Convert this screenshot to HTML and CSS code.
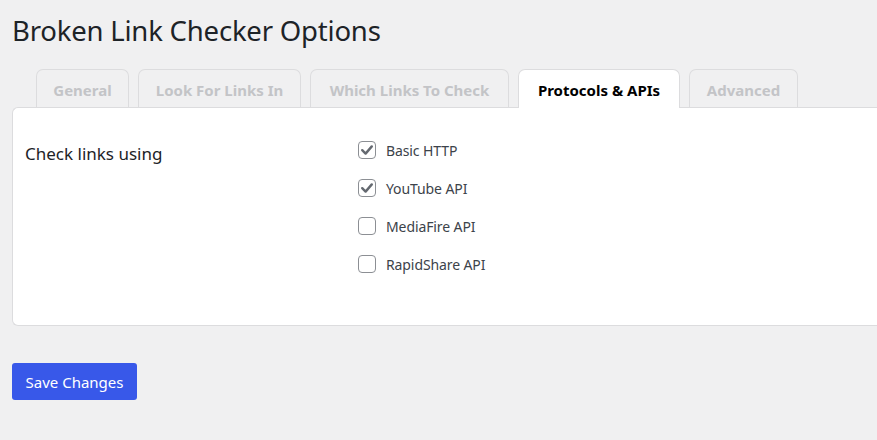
FILE: index.html
```html
<!DOCTYPE html>
<html>
<head>
<meta charset="utf-8">
<link rel="stylesheet" href="styles.css">
</head>
<body>
<div class="wrap">
  <h1 class="title">Broken Link Checker Options</h1>
  <div class="tabs">
    <div class="tab tab-general">General</div>
    <div class="tab tab-look">Look For Links In</div>
    <div class="tab tab-which">Which Links To Check</div>
    <div class="tab tab-proto active">Protocols &amp; APIs</div>
    <div class="tab tab-adv">Advanced</div>
  </div>
  <div class="panel">
    <div class="row">
      <div class="label">Check links using</div>
      <div class="options">
        <label class="opt"><span class="box checked"><svg viewBox="0 0 18 18" width="18" height="18"><path d="M4.2 9.2 L7.6 12.6 L13.8 5.4" fill="none" stroke="#646970" stroke-width="2.4" stroke-linecap="round" stroke-linejoin="round"/></svg></span>Basic HTTP</label>
        <label class="opt"><span class="box checked"><svg viewBox="0 0 18 18" width="18" height="18"><path d="M4.2 9.2 L7.6 12.6 L13.8 5.4" fill="none" stroke="#646970" stroke-width="2.4" stroke-linecap="round" stroke-linejoin="round"/></svg></span>YouTube API</label>
        <label class="opt"><span class="box"></span>MediaFire API</label>
        <label class="opt"><span class="box"></span>RapidShare API</label>
      </div>
    </div>
  </div>
  <button class="save">Save Changes</button>
</div>
</body>
</html>
```
FILE: styles.css
```css
html, body {
  margin: 0;
  padding: 0;
  background: #f0f0f1;
  font-family: "Noto Sans", "Open Sans", sans-serif;
  color: #1d2327;
}
.wrap {
  padding: 0 0 0 12px;
  overflow: hidden;
}
.title {
  margin: 0;
  padding-top: 13px;
  font-size: 27.5px;
  font-weight: 400;
  line-height: 36px;
  color: #1d2327;
  letter-spacing: -0.2px;
}
.tabs {
  display: flex;
  gap: 9px;
  padding-left: 24px;
  margin-top: 20px;
  position: relative;
  z-index: 1;
}
.tab {
  height: 38px;
  box-sizing: border-box;
  border: 1px solid #dcdcde;
  border-bottom: none;
  border-radius: 7px 7px 0 0;
  background: #f0f0f1;
  color: #c3c4c7;
  font-weight: 700;
  font-size: 15px;
  line-height: 40px;
  text-align: center;
  white-space: nowrap;
}
.tab-general { width: 93px; }
.tab-look { width: 163px; }
.tab-which { width: 199px; }
.tab-proto { width: 162px; }
.tab-adv { width: 109px; }
.tab.active {
  background: #fff;
  color: #000;
  height: 39px;
}
.panel {
  background: #fff;
  border: 1px solid #dcdcde;
  border-right: none;
  border-radius: 6px 0 0 6px;
  margin-top: -1px;
  height: 219px;
  box-sizing: border-box;
  padding: 33px 0 0 12px;
}
.row {
  display: flex;
}
.label {
  width: 333px;
  font-size: 17px;
  line-height: 24px;
  padding-top: 1px;
  color: #1d2327;
}
.options {
  display: flex;
  flex-direction: column;
  gap: 20px;
}
.opt {
  display: flex;
  align-items: center;
  height: 18px;
  font-size: 14px;
  color: #3c434a;
  letter-spacing: -0.1px;
}
.box {
  width: 18px;
  height: 18px;
  box-sizing: border-box;
  border: 1px solid #8c8f94;
  border-radius: 4px;
  margin-right: 10px;
  position: relative;
  background: #fff;
}
.box svg {
  position: absolute;
  left: -1px;
  top: -1px;
}
.save {
  display: block;
  margin-top: 37px;
  background: #3858e9;
  color: #fff;
  border: none;
  border-radius: 3px;
  height: 37px;
  width: 125px;
  font-family: inherit;
  font-size: 15px;
  padding: 0;
  cursor: pointer;
}
```
